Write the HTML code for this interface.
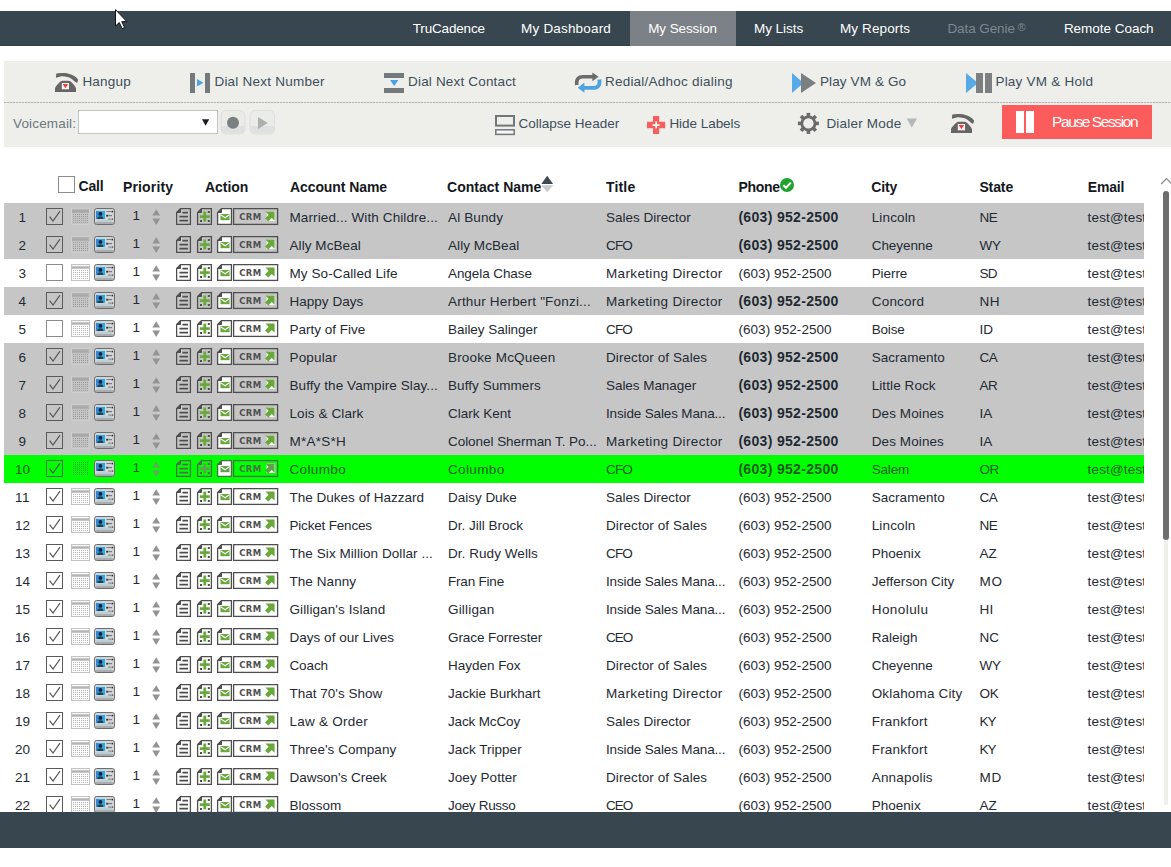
<!DOCTYPE html>
<html lang="en">
<head>
<meta charset="utf-8">
<title>TruCadence - My Session</title>
<style>
html,body{margin:0;padding:0}
body{width:1171px;height:867px;position:relative;overflow:hidden;background:#fff;font-family:"Liberation Sans",sans-serif;font-size:14px}
.t{position:absolute;white-space:pre;line-height:0;display:block}
.abs{position:absolute;display:block}
.nav{position:absolute;left:0;top:11px;width:1171px;height:35px;background:#38464f;box-shadow:inset 0 -1px 0 #2e3d47}
.nav .t{margin-top:-11px}
.navact{position:absolute;left:630px;top:0;width:106px;height:35px;background:#7b8186}
.tb{position:absolute;left:4px;top:61px;width:1167px;height:86px;background:#eeeeea}
.tbline{position:absolute;left:4px;top:102px;width:1167px;height:1px;background:repeating-linear-gradient(90deg,#b4b4b2 0,#b4b4b2 2px,#d9d9d6 2px,#d9d9d6 3px)}
.pause{position:absolute;left:1002px;top:105px;width:150px;height:34px;background:#fc5c5c}
.pause i{position:absolute;top:6px;width:8px;height:22px;background:#fff}
.cb{position:absolute;width:15px;height:15px;border:1px solid #8c8c8c;background:#fff}
.cb.ck{border-color:#5a5a5a}
.cb svg{display:block}
.grid{position:absolute;left:4px;top:0;width:1140px;height:812px;overflow:hidden}
.row{position:absolute;left:0;width:1140px;height:28px}
.row.g{background:#c6c6c6}
.row.G{background:#00ff00}
.row.G .cb{border-color:#4a704a}
.ic{color:#4e4e4e}
.row.G .ic{color:#4a704a;--g:#62a04c;--a:#5fa85f}
.row.g .cb,.row.G .cb{background:transparent}
.sbt{position:absolute;left:1164px;top:191px;width:4px;height:614px;background:#eeeeea;border-radius:2px}
.sbh{position:absolute;left:1163px;top:191px;width:6px;height:349px;background:#6e6e6e;border-radius:3px}
.foot{position:absolute;left:0;top:812px;width:1171px;height:36px;background:#38464f}
</style>
</head>
<body>
<svg width="0" height="0" style="position:absolute">
<defs>
<pattern id="dots" x="0" y="0" width="2" height="2" patternUnits="userSpaceOnUse"><rect x="0" y="0" width="1" height="1" fill="#b4b4b4"/></pattern>
<pattern id="dotsd" x="0" y="0" width="2" height="2" patternUnits="userSpaceOnUse"><rect x="0" y="0" width="1" height="1" fill="#9a9a9a"/></pattern>
<g id="card">
 <rect x="0.5" y="0.5" width="20" height="16" rx="2.2" fill="#d2d5d7" stroke="#6c6c6c"/>
 <rect x="1.2" y="14" width="18.6" height="2" fill="#8a8a8a" opacity=".55"/>
 <rect x="2" y="3" width="9" height="8" fill="#25a9e8"/>
 <rect x="2" y="3" width="2.4" height="8" fill="#2f7fd6" opacity=".8"/>
 <circle cx="6.4" cy="5.9" r="1.9" fill="#17182a"/>
 <path d="M3.4 11 Q3.4 8.2 6.4 8.2 Q9.4 8.2 9.4 11Z" fill="#21414b"/>
 <rect x="12.4" y="3" width="5" height="1" fill="#7d7d7d"/><rect x="17.6" y="2.8" width="1.6" height="1.6" fill="#333"/>
 <rect x="12.2" y="6.8" width="2" height="1.8" fill="#333"/><rect x="14.4" y="7" width="3.6" height="1.2" fill="#777"/>
 <rect x="14.4" y="10.6" width="3" height="1.2" fill="#888"/><rect x="17.8" y="10.4" width="1.4" height="1.4" fill="#555"/>
 <rect x="2.4" y="12.2" width="15.6" height="1.6" fill="#b5c9d6" opacity=".8"/>
</g>
<g id="calw">
 <rect x="0.5" y="0.5" width="18" height="16" fill="#fff" stroke="#c2c2c2"/>
 <rect x="1" y="2.2" width="17" height="2.6" fill="#b6b6b6"/>
 <rect x="2" y="6" width="15" height="9" fill="url(#dots)"/>
</g>
<g id="calg">
 <rect x="0.5" y="0.5" width="18" height="16" fill="none" stroke="#d6d6d6" stroke-dasharray="1 1"/>
 <rect x="1" y="1" width="17" height="1.2" fill="#b2b2b2"/>
 <rect x="1" y="2.2" width="17" height="2.6" fill="#a8a8a8"/>
 <rect x="2" y="6" width="15" height="9" fill="url(#dotsd)"/>
</g>
<pattern id="dotsG" x="0" y="0" width="2" height="2" patternUnits="userSpaceOnUse"><rect x="0" y="0" width="1" height="1" fill="#2a9a2a"/></pattern>
<g id="calG">
 <rect x="1" y="1" width="17" height="15" fill="url(#dotsG)"/>
</g>
<g id="acts">
 <!-- note -->
 <path d="M4.5 0.6 H14.4 V16.4 H0.6 V4.5 Z" fill="none" stroke="currentColor" stroke-width="1.3"/>
 <path d="M0.6 4.5 H4.5 V0.6" fill="currentColor" stroke="currentColor" stroke-width="1"/>
 <path d="M6.4 4.6 H12 M3.4 8.6 H12 M3.4 12.6 H12" stroke="currentColor" stroke-width="1.8"/>
 <!-- plus -->
 <g transform="translate(21,0)">
 <path d="M4.5 0.6 H14.4 V16.4 H0.6 V4.5 Z" fill="none" stroke="currentColor" stroke-width="1.3"/>
 <path d="M0.6 4.5 H4.5 V0.6" fill="currentColor" stroke="currentColor" stroke-width="1"/>
 <path d="M7.8 3.6 V13.6 M2.8 8.6 H12.8" stroke="var(--g,#69a83b)" stroke-width="2.8"/>
 <path d="M10.8 3 h2 v2 h-2z M3 12 h2 v2 h-2z M10.8 12 h2 v2 h-2z" fill="currentColor"/>
 </g>
 <!-- mail -->
 <g transform="translate(41,0)">
 <path d="M4.5 0.6 H14.4 V16.4 H0.6 V4.5 Z" fill="#fff" stroke="currentColor" stroke-width="1.3"/>
 <path d="M0.6 4.5 H4.5 V0.6" fill="currentColor" stroke="currentColor" stroke-width="1"/>
 <rect x="3.5" y="6" width="9" height="6.2" fill="var(--g,#69a83b)"/>
 <path d="M3.5 6.6 L8 9.8 L12.5 6.6" stroke="#fff" stroke-width="1.1" fill="none"/>
 </g>
 <!-- crm -->
 <g transform="translate(57,0)">
 <rect x="0.6" y="0.6" width="44" height="15.8" fill="none" stroke="currentColor" stroke-width="1.3"/>
 <rect x="33.6" y="3.4" width="8.6" height="9.6" fill="#fff"/>
 <path d="M32.4 3.6 H41.6 V12.8 L38.8 10 L35.2 13.6 L32 10.4 L35.6 6.8 Z" fill="var(--g,#69a83b)"/>
 </g>
</g>
</defs>
</svg>
<div class="nav">
<div class="navact"></div>
<span class="t" style="left:412.8px;top:29.1px;font-size:13.5px;font-weight:400;color:#fff;letter-spacing:-0.18px;">TruCadence</span>
<span class="t" style="left:521.1px;top:29.1px;font-size:13.5px;font-weight:400;color:#fff;letter-spacing:0.18px;">My Dashboard</span>
<span class="t" style="left:648.2px;top:29.1px;font-size:13.5px;font-weight:400;color:#fff;letter-spacing:-0.10px;">My Session</span>
<span class="t" style="left:753.9px;top:29.1px;font-size:13.5px;font-weight:400;color:#fff;letter-spacing:-0.01px;">My Lists</span>
<span class="t" style="left:840.0px;top:29.1px;font-size:13.5px;font-weight:400;color:#fff;letter-spacing:0.11px;">My Reports</span>
<span class="t" style="left:1063.8999999999999px;top:29.1px;font-size:13.5px;font-weight:400;color:#fff;letter-spacing:-0.03px;">Remote Coach</span>
<span class="t" style="left:947.4px;top:29.1px;font-size:13.5px;font-weight:400;color:#7f888e;letter-spacing:-0.08px;">Data Genie</span>
<span class="t" style="left:1017.5px;top:27.1px;font-size:11px;font-weight:400;color:#7f888e;letter-spacing:0.89px;">®</span>
</div>
<div class="tb"></div><div class="tbline"></div>
<span class="t" style="left:82.4px;top:81.7px;font-size:13.5px;font-weight:400;color:#3d4e5b;letter-spacing:0.22px;">Hangup</span>
<span class="t" style="left:214.4px;top:81.7px;font-size:13.5px;font-weight:400;color:#3d4e5b;letter-spacing:0.24px;">Dial Next Number</span>
<span class="t" style="left:408.1px;top:81.7px;font-size:13.5px;font-weight:400;color:#3d4e5b;letter-spacing:0.17px;">Dial Next Contact</span>
<span class="t" style="left:604.9px;top:81.7px;font-size:13.5px;font-weight:400;color:#3d4e5b;letter-spacing:0.24px;">Redial/Adhoc dialing</span>
<span class="t" style="left:819.9px;top:81.7px;font-size:13.5px;font-weight:400;color:#3d4e5b;letter-spacing:0.13px;">Play VM &amp; Go</span>
<span class="t" style="left:995.4px;top:81.7px;font-size:13.5px;font-weight:400;color:#3d4e5b;letter-spacing:0.23px;">Play VM &amp; Hold</span>
<span class="t" style="left:13px;top:123.5px;font-size:13.5px;font-weight:400;color:#6b7780;letter-spacing:0.16px;">Voicemail:</span>
<span class="t" style="left:518.4px;top:123.5px;font-size:13.5px;font-weight:400;color:#3d4e5b;letter-spacing:0.02px;">Collapse Header</span>
<span class="t" style="left:669.4px;top:123.5px;font-size:13.5px;font-weight:400;color:#3d4e5b;letter-spacing:-0.04px;">Hide Labels</span>
<span class="t" style="left:826.4px;top:123.5px;font-size:13.5px;font-weight:400;color:#3d4e5b;letter-spacing:0.21px;">Dialer Mode</span>
<svg class="abs" style="left:0;top:61px" width="1171" height="86" viewBox="0 61 1171 86">
<defs>
<g id="phone">
 <path d="M1.3 0.5 C4 -0.3 8 -0.2 10.5 0.1 C15 0.8 19 2.6 21.1 4.3 L23.2 6.8 L22.1 10 L20 8.8 L17.7 6.8 C15.5 5.1 13.5 4.3 12.5 4.1 C10 3.4 7.5 3.2 5.7 3.4 L0.9 4.8 Z" fill="#666"/>
 <path d="M0 19 V15.4 C0 13.6 4.2 9.6 5.6 8.4 Q6.4 7.7 7.6 7.7 H13.6 Q14.8 7.7 15.6 8.4 C17 9.6 21 13.6 21 15.4 V19 Z" fill="#666"/>
 <rect x="6.8" y="10" width="7.2" height="6.3" fill="#f4f4f4"/>
 <path d="M7.7 10.9 H13.1 L10.4 15.3 Z" fill="#ee3b3b"/>
</g>
</defs>
<use href="#phone" x="55" y="73"/>
<use href="#phone" x="951" y="114"/>
<!-- dial next number -->
<rect x="190" y="73" width="5" height="20" fill="#747a7c"/><rect x="205" y="73" width="5" height="20" fill="#747a7c"/>
<path d="M197 79 L203.4 82.8 L197 86.6Z" fill="#4ba3e7"/>
<!-- dial next contact -->
<rect x="384" y="73" width="20" height="5" fill="#747a7c"/><rect x="384" y="88" width="20" height="5" fill="#747a7c"/>
<path d="M390 80 H398.4 L394.2 86Z" fill="#4ba3e7"/>
<!-- redial -->
<path d="M576.8 85 C576 79 578.5 76.8 583 76.8 H593" fill="none" stroke="#6b6b6b" stroke-width="3.6"/>
<path d="M592.4 72.6 L598.6 76.8 L592.4 81.2Z" fill="#6b6b6b"/>
<path d="M599.4 79.4 C600.2 85.6 597.8 87.8 593 87.8 H583.4" fill="none" stroke="#4ea2e3" stroke-width="3.8"/>
<path d="M584.4 82.6 L577.8 87.8 L584.4 92.8Z" fill="#4ea2e3"/>
<!-- play vm & go -->
<path d="M792 73 L803.5 83 L792 93Z" fill="#57a9e7"/><path d="M801 73 L816 83 L801 93Z" fill="#7b7f81"/>
<!-- play vm & hold -->
<path d="M966 73 L978 83 L966 93Z" fill="#57a9e7"/><rect x="976" y="73" width="7" height="20" fill="#7b7f81"/><rect x="985" y="73" width="7" height="20" fill="#7b7f81"/>
<!-- select -->
<rect x="78.5" y="110.5" width="139" height="23" fill="#fff" stroke="#8d8d8d" stroke-width="1" stroke-dasharray="1 1"/>
<path d="M202 119.2 H209.2 L205.6 125.8Z" fill="#1a1a22"/>
<!-- rec / play buttons -->
<rect x="221" y="110.5" width="24" height="23.5" rx="5" fill="#ebebe8" stroke="#dcdfe0" stroke-width="1"/>
<path d="M221.5 126 H244.5 V129 Q244.5 133.5 240 133.5 H226 Q221.5 133.5 221.5 129Z" fill="#dfe1e1"/>
<circle cx="233" cy="122.8" r="6" fill="#7b8081"/>
<rect x="250" y="110.5" width="24.5" height="23.5" rx="5" fill="#ebebe8" stroke="#dcdfe0" stroke-width="1"/>
<path d="M250.5 126 H274 V129 Q274 133.5 269.5 133.5 H255 Q250.5 133.5 250.5 129Z" fill="#dfe1e1"/>
<path d="M258 117 L267.8 123 L258 129Z" fill="#aeb0b0"/>
<!-- collapse header -->
<rect x="496" y="116" width="18" height="9.6" fill="none" stroke="#70777a" stroke-width="2"/>
<rect x="495.8" y="129.8" width="18.4" height="4.6" fill="#f6f6f4" stroke="#70777a" stroke-width="1.5"/>
<!-- hide labels -->
<path d="M653 116 H659.2 V121.8 H665.2 V128.2 H659.2 V134 H653 V128.2 H647 V121.8 H653Z" fill="#f95e5e"/>
<path d="M656.1 121.6 V128.6 M652.6 125.1 H659.6" stroke="#fff" stroke-width="1.6"/>
<!-- gear -->
<g transform="translate(808.4,123.4)" fill="#6b6b6b">
 <g id="tooth2"><rect x="-1.8" y="-10.5" width="3.6" height="21"/></g>
 <use href="#tooth2" transform="rotate(45)"/><use href="#tooth2" transform="rotate(90)"/><use href="#tooth2" transform="rotate(135)"/>
 <circle r="8"/><circle r="5.2" fill="#eeeeea"/>
</g>
<!-- dialer mode caret -->
<path d="M906.6 118.6 H917 L911.8 127.4Z" fill="#b3b8b8"/>
</svg>

<div class="pause"><i style="left:14px"></i><i style="left:24px"></i></div>
<span class="t" style="left:1052px;top:121.9px;font-size:15.5px;font-weight:400;color:#fff;letter-spacing:-1.40px;">Pause Session</span>
<div class="cb" style="left:58px;top:176px"></div>
<span class="t" style="left:78.5px;top:185.9px;font-size:14px;font-weight:700;color:#14181c;letter-spacing:-0.17px;">Call</span>
<span class="t" style="left:123px;top:186.8px;font-size:14px;font-weight:700;color:#14181c;letter-spacing:0.14px;">Priority</span>
<span class="t" style="left:205px;top:186.8px;font-size:14px;font-weight:700;color:#14181c;letter-spacing:-0.04px;">Action</span>
<span class="t" style="left:290px;top:186.8px;font-size:14px;font-weight:700;color:#14181c;letter-spacing:-0.09px;">Account Name</span>
<span class="t" style="left:447px;top:186.8px;font-size:14px;font-weight:700;color:#14181c;letter-spacing:0.02px;">Contact Name</span>
<span class="t" style="left:606px;top:186.8px;font-size:14px;font-weight:700;color:#14181c;letter-spacing:0.17px;">Title</span>
<span class="t" style="left:738.4px;top:186.8px;font-size:14px;font-weight:700;color:#14181c;letter-spacing:-0.28px;">Phone</span>
<span class="t" style="left:871.2px;top:186.8px;font-size:14px;font-weight:700;color:#14181c;letter-spacing:-0.09px;">City</span>
<span class="t" style="left:979.4px;top:186.8px;font-size:14px;font-weight:700;color:#14181c;letter-spacing:-0.11px;">State</span>
<span class="t" style="left:1087.8px;top:186.8px;font-size:14px;font-weight:700;color:#14181c;letter-spacing:-0.19px;">Email</span>
<svg class="abs" style="left:541px;top:175px" width="13" height="18" viewBox="0 0 13 18"><path d="M0.3 9 L6.2 0.8 L12.1 9Z" fill="#3d4a52"/><path d="M0.3 10.2 L12.1 10.2 L6.2 17.2Z" fill="#c9c9c9"/></svg>
<svg class="abs" style="left:780px;top:178px" width="14" height="14" viewBox="0 0 14 14"><circle cx="7" cy="7" r="7" fill="#23a230"/><path d="M3.4 7.2 L6 9.8 L10.8 4.6" stroke="#fff" stroke-width="2" fill="none"/></svg>
<div class="grid">
<div class="row g" style="top:203px">
<span class="t" style="left:14.6px;top:15.3px;font-size:13.5px;font-weight:400;color:#1f2a33;letter-spacing:0.03px;">1</span>
<div class="cb ck" style="left:42px;top:5px"><svg width="15" height="15" viewBox="0 0 15 15"><path d="M2.6 7.6 L6 12 L13 2.2" stroke="#555" stroke-width="1.2" fill="none"/></svg></div>
<svg class="abs" style="left:67px;top:5px" width="44" height="18"><use href="#calg"/><use href="#card" x="23"/></svg>
<span class="t" style="left:128.4px;top:12.9px;font-size:13.5px;font-weight:400;color:#1f2a33;letter-spacing:0.03px;">1</span>
<svg class="abs ic" style="left:148px;top:6px" width="9" height="17" viewBox="0 0 9 17"><path d="M0.3 6.6 L4.2 0.2 L8.1 6.6Z M0.3 9.4 L8.1 9.4 L4.2 16Z" fill="var(--a,#939393)"/></svg>
<svg class="abs ic" style="left:172px;top:5px" width="106" height="18"><use href="#acts"/></svg>
<span class="t" style="left:235.2px;top:13.5px;font-size:8.5px;font-weight:700;color:#4f4f4f;letter-spacing:0.38px;font-family:'DejaVu Sans','Liberation Sans',sans-serif;">CRM</span>
<span class="t" style="left:285.5px;top:15.3px;font-size:13.5px;font-weight:400;color:#1f2a33;letter-spacing:0.11px;">Married... With Childre...</span>
<span class="t" style="left:444px;top:15.3px;font-size:13.5px;font-weight:400;color:#1f2a33;letter-spacing:0.13px;">Al Bundy</span>
<span class="t" style="left:602px;top:15.3px;font-size:13.5px;font-weight:400;color:#1f2a33;letter-spacing:-0.00px;">Sales Director</span>
<span class="t" style="left:734.4px;top:13.8px;font-size:14px;font-weight:700;color:#1f2a33;letter-spacing:0.32px;">(603) 952-2500</span>
<span class="t" style="left:867.7px;top:15.3px;font-size:13.5px;font-weight:400;color:#1f2a33;letter-spacing:0.15px;">Lincoln</span>
<span class="t" style="left:975.6px;top:15.3px;font-size:13.5px;font-weight:400;color:#1f2a33;letter-spacing:-0.61px;">NE</span>
<span class="t" style="left:1083.6px;top:15.3px;font-size:13.5px;font-weight:400;color:#1f2a33;letter-spacing:0.16px;">test@test.com</span>
</div>
<div class="row g" style="top:231px">
<span class="t" style="left:14.6px;top:15.3px;font-size:13.5px;font-weight:400;color:#1f2a33;letter-spacing:0.03px;">2</span>
<div class="cb ck" style="left:42px;top:5px"><svg width="15" height="15" viewBox="0 0 15 15"><path d="M2.6 7.6 L6 12 L13 2.2" stroke="#555" stroke-width="1.2" fill="none"/></svg></div>
<svg class="abs" style="left:67px;top:5px" width="44" height="18"><use href="#calg"/><use href="#card" x="23"/></svg>
<span class="t" style="left:128.4px;top:12.9px;font-size:13.5px;font-weight:400;color:#1f2a33;letter-spacing:0.03px;">1</span>
<svg class="abs ic" style="left:148px;top:6px" width="9" height="17" viewBox="0 0 9 17"><path d="M0.3 6.6 L4.2 0.2 L8.1 6.6Z M0.3 9.4 L8.1 9.4 L4.2 16Z" fill="var(--a,#939393)"/></svg>
<svg class="abs ic" style="left:172px;top:5px" width="106" height="18"><use href="#acts"/></svg>
<span class="t" style="left:235.2px;top:13.5px;font-size:8.5px;font-weight:700;color:#4f4f4f;letter-spacing:0.38px;font-family:'DejaVu Sans','Liberation Sans',sans-serif;">CRM</span>
<span class="t" style="left:285.5px;top:15.3px;font-size:13.5px;font-weight:400;color:#1f2a33;letter-spacing:0.07px;">Ally McBeal</span>
<span class="t" style="left:444px;top:15.3px;font-size:13.5px;font-weight:400;color:#1f2a33;letter-spacing:0.07px;">Ally McBeal</span>
<span class="t" style="left:602px;top:15.3px;font-size:13.5px;font-weight:400;color:#1f2a33;letter-spacing:-0.82px;">CFO</span>
<span class="t" style="left:734.4px;top:13.8px;font-size:14px;font-weight:700;color:#1f2a33;letter-spacing:0.32px;">(603) 952-2500</span>
<span class="t" style="left:867.7px;top:15.3px;font-size:13.5px;font-weight:400;color:#1f2a33;letter-spacing:-0.06px;">Cheyenne</span>
<span class="t" style="left:975.6px;top:15.3px;font-size:13.5px;font-weight:400;color:#1f2a33;letter-spacing:-0.44px;">WY</span>
<span class="t" style="left:1083.6px;top:15.3px;font-size:13.5px;font-weight:400;color:#1f2a33;letter-spacing:0.16px;">test@test.com</span>
</div>
<div class="row" style="top:259px">
<span class="t" style="left:14.6px;top:15.3px;font-size:13.5px;font-weight:400;color:#1f2a33;letter-spacing:0.03px;">3</span>
<div class="cb" style="left:42px;top:5px"></div>
<svg class="abs" style="left:67px;top:5px" width="44" height="18"><use href="#calw"/><use href="#card" x="23"/></svg>
<span class="t" style="left:128.4px;top:12.9px;font-size:13.5px;font-weight:400;color:#1f2a33;letter-spacing:0.03px;">1</span>
<svg class="abs ic" style="left:148px;top:6px" width="9" height="17" viewBox="0 0 9 17"><path d="M0.3 6.6 L4.2 0.2 L8.1 6.6Z M0.3 9.4 L8.1 9.4 L4.2 16Z" fill="var(--a,#939393)"/></svg>
<svg class="abs ic" style="left:172px;top:5px" width="106" height="18"><use href="#acts"/></svg>
<span class="t" style="left:235.2px;top:13.5px;font-size:8.5px;font-weight:700;color:#4f4f4f;letter-spacing:0.38px;font-family:'DejaVu Sans','Liberation Sans',sans-serif;">CRM</span>
<span class="t" style="left:285.5px;top:15.3px;font-size:13.5px;font-weight:400;color:#1f2a33;letter-spacing:0.09px;">My So-Called Life</span>
<span class="t" style="left:444px;top:15.3px;font-size:13.5px;font-weight:400;color:#1f2a33;letter-spacing:-0.08px;">Angela Chase</span>
<span class="t" style="left:602px;top:15.3px;font-size:13.5px;font-weight:400;color:#1f2a33;letter-spacing:0.35px;">Marketing Director</span>
<span class="t" style="left:734.4px;top:15.3px;font-size:13.5px;font-weight:400;color:#1f2a33;letter-spacing:0.07px;">(603) 952-2500</span>
<span class="t" style="left:867.7px;top:15.3px;font-size:13.5px;font-weight:400;color:#1f2a33;letter-spacing:-0.07px;">Pierre</span>
<span class="t" style="left:975.6px;top:15.3px;font-size:13.5px;font-weight:400;color:#1f2a33;letter-spacing:-0.76px;">SD</span>
<span class="t" style="left:1083.6px;top:15.3px;font-size:13.5px;font-weight:400;color:#1f2a33;letter-spacing:0.16px;">test@test.com</span>
</div>
<div class="row g" style="top:287px">
<span class="t" style="left:14.6px;top:15.3px;font-size:13.5px;font-weight:400;color:#1f2a33;letter-spacing:0.03px;">4</span>
<div class="cb ck" style="left:42px;top:5px"><svg width="15" height="15" viewBox="0 0 15 15"><path d="M2.6 7.6 L6 12 L13 2.2" stroke="#555" stroke-width="1.2" fill="none"/></svg></div>
<svg class="abs" style="left:67px;top:5px" width="44" height="18"><use href="#calg"/><use href="#card" x="23"/></svg>
<span class="t" style="left:128.4px;top:12.9px;font-size:13.5px;font-weight:400;color:#1f2a33;letter-spacing:0.03px;">1</span>
<svg class="abs ic" style="left:148px;top:6px" width="9" height="17" viewBox="0 0 9 17"><path d="M0.3 6.6 L4.2 0.2 L8.1 6.6Z M0.3 9.4 L8.1 9.4 L4.2 16Z" fill="var(--a,#939393)"/></svg>
<svg class="abs ic" style="left:172px;top:5px" width="106" height="18"><use href="#acts"/></svg>
<span class="t" style="left:235.2px;top:13.5px;font-size:8.5px;font-weight:700;color:#4f4f4f;letter-spacing:0.38px;font-family:'DejaVu Sans','Liberation Sans',sans-serif;">CRM</span>
<span class="t" style="left:285.5px;top:15.3px;font-size:13.5px;font-weight:400;color:#1f2a33;letter-spacing:0.02px;">Happy Days</span>
<span class="t" style="left:444px;top:15.3px;font-size:13.5px;font-weight:400;color:#1f2a33;letter-spacing:0.19px;">Arthur Herbert &quot;Fonzi...</span>
<span class="t" style="left:602px;top:15.3px;font-size:13.5px;font-weight:400;color:#1f2a33;letter-spacing:0.35px;">Marketing Director</span>
<span class="t" style="left:734.4px;top:13.8px;font-size:14px;font-weight:700;color:#1f2a33;letter-spacing:0.32px;">(603) 952-2500</span>
<span class="t" style="left:867.7px;top:15.3px;font-size:13.5px;font-weight:400;color:#1f2a33;letter-spacing:0.22px;">Concord</span>
<span class="t" style="left:975.6px;top:15.3px;font-size:13.5px;font-weight:400;color:#1f2a33;letter-spacing:0.46px;">NH</span>
<span class="t" style="left:1083.6px;top:15.3px;font-size:13.5px;font-weight:400;color:#1f2a33;letter-spacing:0.16px;">test@test.com</span>
</div>
<div class="row" style="top:315px">
<span class="t" style="left:14.6px;top:15.3px;font-size:13.5px;font-weight:400;color:#1f2a33;letter-spacing:0.03px;">5</span>
<div class="cb" style="left:42px;top:5px"></div>
<svg class="abs" style="left:67px;top:5px" width="44" height="18"><use href="#calw"/><use href="#card" x="23"/></svg>
<span class="t" style="left:128.4px;top:12.9px;font-size:13.5px;font-weight:400;color:#1f2a33;letter-spacing:0.03px;">1</span>
<svg class="abs ic" style="left:148px;top:6px" width="9" height="17" viewBox="0 0 9 17"><path d="M0.3 6.6 L4.2 0.2 L8.1 6.6Z M0.3 9.4 L8.1 9.4 L4.2 16Z" fill="var(--a,#939393)"/></svg>
<svg class="abs ic" style="left:172px;top:5px" width="106" height="18"><use href="#acts"/></svg>
<span class="t" style="left:235.2px;top:13.5px;font-size:8.5px;font-weight:700;color:#4f4f4f;letter-spacing:0.38px;font-family:'DejaVu Sans','Liberation Sans',sans-serif;">CRM</span>
<span class="t" style="left:285.5px;top:15.3px;font-size:13.5px;font-weight:400;color:#1f2a33;letter-spacing:0.00px;">Party of Five</span>
<span class="t" style="left:444px;top:15.3px;font-size:13.5px;font-weight:400;color:#1f2a33;letter-spacing:-0.04px;">Bailey Salinger</span>
<span class="t" style="left:602px;top:15.3px;font-size:13.5px;font-weight:400;color:#1f2a33;letter-spacing:-0.82px;">CFO</span>
<span class="t" style="left:734.4px;top:15.3px;font-size:13.5px;font-weight:400;color:#1f2a33;letter-spacing:0.07px;">(603) 952-2500</span>
<span class="t" style="left:867.7px;top:15.3px;font-size:13.5px;font-weight:400;color:#1f2a33;letter-spacing:-0.18px;">Boise</span>
<span class="t" style="left:975.6px;top:15.3px;font-size:13.5px;font-weight:400;color:#1f2a33;letter-spacing:0.02px;">ID</span>
<span class="t" style="left:1083.6px;top:15.3px;font-size:13.5px;font-weight:400;color:#1f2a33;letter-spacing:0.16px;">test@test.com</span>
</div>
<div class="row g" style="top:343px">
<span class="t" style="left:14.6px;top:15.3px;font-size:13.5px;font-weight:400;color:#1f2a33;letter-spacing:0.03px;">6</span>
<div class="cb ck" style="left:42px;top:5px"><svg width="15" height="15" viewBox="0 0 15 15"><path d="M2.6 7.6 L6 12 L13 2.2" stroke="#555" stroke-width="1.2" fill="none"/></svg></div>
<svg class="abs" style="left:67px;top:5px" width="44" height="18"><use href="#calg"/><use href="#card" x="23"/></svg>
<span class="t" style="left:128.4px;top:12.9px;font-size:13.5px;font-weight:400;color:#1f2a33;letter-spacing:0.03px;">1</span>
<svg class="abs ic" style="left:148px;top:6px" width="9" height="17" viewBox="0 0 9 17"><path d="M0.3 6.6 L4.2 0.2 L8.1 6.6Z M0.3 9.4 L8.1 9.4 L4.2 16Z" fill="var(--a,#939393)"/></svg>
<svg class="abs ic" style="left:172px;top:5px" width="106" height="18"><use href="#acts"/></svg>
<span class="t" style="left:235.2px;top:13.5px;font-size:8.5px;font-weight:700;color:#4f4f4f;letter-spacing:0.38px;font-family:'DejaVu Sans','Liberation Sans',sans-serif;">CRM</span>
<span class="t" style="left:285.5px;top:15.3px;font-size:13.5px;font-weight:400;color:#1f2a33;letter-spacing:0.15px;">Popular</span>
<span class="t" style="left:444px;top:15.3px;font-size:13.5px;font-weight:400;color:#1f2a33;letter-spacing:0.17px;">Brooke McQueen</span>
<span class="t" style="left:602px;top:15.3px;font-size:13.5px;font-weight:400;color:#1f2a33;letter-spacing:0.08px;">Director of Sales</span>
<span class="t" style="left:734.4px;top:13.8px;font-size:14px;font-weight:700;color:#1f2a33;letter-spacing:0.32px;">(603) 952-2500</span>
<span class="t" style="left:867.7px;top:15.3px;font-size:13.5px;font-weight:400;color:#1f2a33;letter-spacing:0.04px;">Sacramento</span>
<span class="t" style="left:975.6px;top:15.3px;font-size:13.5px;font-weight:400;color:#1f2a33;letter-spacing:-0.53px;">CA</span>
<span class="t" style="left:1083.6px;top:15.3px;font-size:13.5px;font-weight:400;color:#1f2a33;letter-spacing:0.16px;">test@test.com</span>
</div>
<div class="row g" style="top:371px">
<span class="t" style="left:14.6px;top:15.3px;font-size:13.5px;font-weight:400;color:#1f2a33;letter-spacing:0.03px;">7</span>
<div class="cb ck" style="left:42px;top:5px"><svg width="15" height="15" viewBox="0 0 15 15"><path d="M2.6 7.6 L6 12 L13 2.2" stroke="#555" stroke-width="1.2" fill="none"/></svg></div>
<svg class="abs" style="left:67px;top:5px" width="44" height="18"><use href="#calg"/><use href="#card" x="23"/></svg>
<span class="t" style="left:128.4px;top:12.9px;font-size:13.5px;font-weight:400;color:#1f2a33;letter-spacing:0.03px;">1</span>
<svg class="abs ic" style="left:148px;top:6px" width="9" height="17" viewBox="0 0 9 17"><path d="M0.3 6.6 L4.2 0.2 L8.1 6.6Z M0.3 9.4 L8.1 9.4 L4.2 16Z" fill="var(--a,#939393)"/></svg>
<svg class="abs ic" style="left:172px;top:5px" width="106" height="18"><use href="#acts"/></svg>
<span class="t" style="left:235.2px;top:13.5px;font-size:8.5px;font-weight:700;color:#4f4f4f;letter-spacing:0.38px;font-family:'DejaVu Sans','Liberation Sans',sans-serif;">CRM</span>
<span class="t" style="left:285.5px;top:15.3px;font-size:13.5px;font-weight:400;color:#1f2a33;letter-spacing:0.08px;">Buffy the Vampire Slay...</span>
<span class="t" style="left:444px;top:15.3px;font-size:13.5px;font-weight:400;color:#1f2a33;letter-spacing:0.06px;">Buffy Summers</span>
<span class="t" style="left:602px;top:15.3px;font-size:13.5px;font-weight:400;color:#1f2a33;letter-spacing:-0.05px;">Sales Manager</span>
<span class="t" style="left:734.4px;top:13.8px;font-size:14px;font-weight:700;color:#1f2a33;letter-spacing:0.32px;">(603) 952-2500</span>
<span class="t" style="left:867.7px;top:15.3px;font-size:13.5px;font-weight:400;color:#1f2a33;letter-spacing:0.09px;">Little Rock</span>
<span class="t" style="left:975.6px;top:15.3px;font-size:13.5px;font-weight:400;color:#1f2a33;letter-spacing:-0.68px;">AR</span>
<span class="t" style="left:1083.6px;top:15.3px;font-size:13.5px;font-weight:400;color:#1f2a33;letter-spacing:0.16px;">test@test.com</span>
</div>
<div class="row g" style="top:399px">
<span class="t" style="left:14.6px;top:15.3px;font-size:13.5px;font-weight:400;color:#1f2a33;letter-spacing:0.03px;">8</span>
<div class="cb ck" style="left:42px;top:5px"><svg width="15" height="15" viewBox="0 0 15 15"><path d="M2.6 7.6 L6 12 L13 2.2" stroke="#555" stroke-width="1.2" fill="none"/></svg></div>
<svg class="abs" style="left:67px;top:5px" width="44" height="18"><use href="#calg"/><use href="#card" x="23"/></svg>
<span class="t" style="left:128.4px;top:12.9px;font-size:13.5px;font-weight:400;color:#1f2a33;letter-spacing:0.03px;">1</span>
<svg class="abs ic" style="left:148px;top:6px" width="9" height="17" viewBox="0 0 9 17"><path d="M0.3 6.6 L4.2 0.2 L8.1 6.6Z M0.3 9.4 L8.1 9.4 L4.2 16Z" fill="var(--a,#939393)"/></svg>
<svg class="abs ic" style="left:172px;top:5px" width="106" height="18"><use href="#acts"/></svg>
<span class="t" style="left:235.2px;top:13.5px;font-size:8.5px;font-weight:700;color:#4f4f4f;letter-spacing:0.38px;font-family:'DejaVu Sans','Liberation Sans',sans-serif;">CRM</span>
<span class="t" style="left:285.5px;top:15.3px;font-size:13.5px;font-weight:400;color:#1f2a33;letter-spacing:0.10px;">Lois &amp; Clark</span>
<span class="t" style="left:444px;top:15.3px;font-size:13.5px;font-weight:400;color:#1f2a33;letter-spacing:-0.01px;">Clark Kent</span>
<span class="t" style="left:602px;top:15.3px;font-size:13.5px;font-weight:400;color:#1f2a33;letter-spacing:-0.15px;">Inside Sales Mana...</span>
<span class="t" style="left:734.4px;top:13.8px;font-size:14px;font-weight:700;color:#1f2a33;letter-spacing:0.32px;">(603) 952-2500</span>
<span class="t" style="left:867.7px;top:15.3px;font-size:13.5px;font-weight:400;color:#1f2a33;letter-spacing:0.10px;">Des Moines</span>
<span class="t" style="left:975.6px;top:15.3px;font-size:13.5px;font-weight:400;color:#1f2a33;letter-spacing:-0.00px;">IA</span>
<span class="t" style="left:1083.6px;top:15.3px;font-size:13.5px;font-weight:400;color:#1f2a33;letter-spacing:0.16px;">test@test.com</span>
</div>
<div class="row g" style="top:427px">
<span class="t" style="left:14.6px;top:15.3px;font-size:13.5px;font-weight:400;color:#1f2a33;letter-spacing:0.03px;">9</span>
<div class="cb ck" style="left:42px;top:5px"><svg width="15" height="15" viewBox="0 0 15 15"><path d="M2.6 7.6 L6 12 L13 2.2" stroke="#555" stroke-width="1.2" fill="none"/></svg></div>
<svg class="abs" style="left:67px;top:5px" width="44" height="18"><use href="#calg"/><use href="#card" x="23"/></svg>
<span class="t" style="left:128.4px;top:12.9px;font-size:13.5px;font-weight:400;color:#1f2a33;letter-spacing:0.03px;">1</span>
<svg class="abs ic" style="left:148px;top:6px" width="9" height="17" viewBox="0 0 9 17"><path d="M0.3 6.6 L4.2 0.2 L8.1 6.6Z M0.3 9.4 L8.1 9.4 L4.2 16Z" fill="var(--a,#939393)"/></svg>
<svg class="abs ic" style="left:172px;top:5px" width="106" height="18"><use href="#acts"/></svg>
<span class="t" style="left:235.2px;top:13.5px;font-size:8.5px;font-weight:700;color:#4f4f4f;letter-spacing:0.38px;font-family:'DejaVu Sans','Liberation Sans',sans-serif;">CRM</span>
<span class="t" style="left:285.5px;top:15.3px;font-size:13.5px;font-weight:400;color:#1f2a33;letter-spacing:0.25px;">M*A*S*H</span>
<span class="t" style="left:444px;top:15.3px;font-size:13.5px;font-weight:400;color:#1f2a33;letter-spacing:-0.05px;">Colonel Sherman T. Po...</span>
<span class="t" style="left:602px;top:15.3px;font-size:13.5px;font-weight:400;color:#1f2a33;letter-spacing:0.35px;">Marketing Director</span>
<span class="t" style="left:734.4px;top:13.8px;font-size:14px;font-weight:700;color:#1f2a33;letter-spacing:0.32px;">(603) 952-2500</span>
<span class="t" style="left:867.7px;top:15.3px;font-size:13.5px;font-weight:400;color:#1f2a33;letter-spacing:0.10px;">Des Moines</span>
<span class="t" style="left:975.6px;top:15.3px;font-size:13.5px;font-weight:400;color:#1f2a33;letter-spacing:-0.00px;">IA</span>
<span class="t" style="left:1083.6px;top:15.3px;font-size:13.5px;font-weight:400;color:#1f2a33;letter-spacing:0.16px;">test@test.com</span>
</div>
<div class="row G" style="top:455px">
<span class="t" style="left:10.9px;top:15.3px;font-size:13.5px;font-weight:400;color:#1a5c1a;letter-spacing:0.03px;">10</span>
<div class="cb ck" style="left:42px;top:5px"><svg width="15" height="15" viewBox="0 0 15 15"><path d="M2.6 7.6 L6 12 L13 2.2" stroke="#555" stroke-width="1.2" fill="none"/></svg></div>
<svg class="abs" style="left:67px;top:5px" width="44" height="18"><use href="#calG"/><use href="#card" x="23"/></svg>
<span class="t" style="left:128.4px;top:12.9px;font-size:13.5px;font-weight:400;color:#1a5c1a;letter-spacing:0.03px;">1</span>
<svg class="abs ic" style="left:148px;top:6px" width="9" height="17" viewBox="0 0 9 17"><path d="M0.3 6.6 L4.2 0.2 L8.1 6.6Z M0.3 9.4 L8.1 9.4 L4.2 16Z" fill="var(--a,#939393)"/></svg>
<svg class="abs ic" style="left:172px;top:5px" width="106" height="18"><use href="#acts"/></svg>
<span class="t" style="left:235.2px;top:13.5px;font-size:8.5px;font-weight:700;color:#4a704a;letter-spacing:0.38px;font-family:'DejaVu Sans','Liberation Sans',sans-serif;">CRM</span>
<span class="t" style="left:285.5px;top:15.3px;font-size:13.5px;font-weight:400;color:#1a5c1a;letter-spacing:0.37px;">Columbo</span>
<span class="t" style="left:444px;top:15.3px;font-size:13.5px;font-weight:400;color:#1a5c1a;letter-spacing:0.37px;">Columbo</span>
<span class="t" style="left:602px;top:15.3px;font-size:13.5px;font-weight:400;color:#1a5c1a;letter-spacing:-0.82px;">CFO</span>
<span class="t" style="left:734.4px;top:13.8px;font-size:14px;font-weight:700;color:#1a5c1a;letter-spacing:0.32px;">(603) 952-2500</span>
<span class="t" style="left:867.7px;top:15.3px;font-size:13.5px;font-weight:400;color:#1a5c1a;letter-spacing:-0.19px;">Salem</span>
<span class="t" style="left:975.6px;top:15.3px;font-size:13.5px;font-weight:400;color:#1a5c1a;letter-spacing:-0.66px;">OR</span>
<span class="t" style="left:1083.6px;top:15.3px;font-size:13.5px;font-weight:400;color:#1a5c1a;letter-spacing:0.16px;">test@test.com</span>
</div>
<div class="row" style="top:483px">
<span class="t" style="left:10.9px;top:15.3px;font-size:13.5px;font-weight:400;color:#1f2a33;letter-spacing:0.54px;">11</span>
<div class="cb ck" style="left:42px;top:5px"><svg width="15" height="15" viewBox="0 0 15 15"><path d="M2.6 7.6 L6 12 L13 2.2" stroke="#555" stroke-width="1.2" fill="none"/></svg></div>
<svg class="abs" style="left:67px;top:5px" width="44" height="18"><use href="#calw"/><use href="#card" x="23"/></svg>
<span class="t" style="left:128.4px;top:12.9px;font-size:13.5px;font-weight:400;color:#1f2a33;letter-spacing:0.03px;">1</span>
<svg class="abs ic" style="left:148px;top:6px" width="9" height="17" viewBox="0 0 9 17"><path d="M0.3 6.6 L4.2 0.2 L8.1 6.6Z M0.3 9.4 L8.1 9.4 L4.2 16Z" fill="var(--a,#939393)"/></svg>
<svg class="abs ic" style="left:172px;top:5px" width="106" height="18"><use href="#acts"/></svg>
<span class="t" style="left:235.2px;top:13.5px;font-size:8.5px;font-weight:700;color:#4f4f4f;letter-spacing:0.38px;font-family:'DejaVu Sans','Liberation Sans',sans-serif;">CRM</span>
<span class="t" style="left:285.5px;top:15.3px;font-size:13.5px;font-weight:400;color:#1f2a33;letter-spacing:0.01px;">The Dukes of Hazzard</span>
<span class="t" style="left:444px;top:15.3px;font-size:13.5px;font-weight:400;color:#1f2a33;letter-spacing:-0.02px;">Daisy Duke</span>
<span class="t" style="left:602px;top:15.3px;font-size:13.5px;font-weight:400;color:#1f2a33;letter-spacing:-0.00px;">Sales Director</span>
<span class="t" style="left:734.4px;top:15.3px;font-size:13.5px;font-weight:400;color:#1f2a33;letter-spacing:0.07px;">(603) 952-2500</span>
<span class="t" style="left:867.7px;top:15.3px;font-size:13.5px;font-weight:400;color:#1f2a33;letter-spacing:0.04px;">Sacramento</span>
<span class="t" style="left:975.6px;top:15.3px;font-size:13.5px;font-weight:400;color:#1f2a33;letter-spacing:-0.53px;">CA</span>
<span class="t" style="left:1083.6px;top:15.3px;font-size:13.5px;font-weight:400;color:#1f2a33;letter-spacing:0.16px;">test@test.com</span>
</div>
<div class="row" style="top:511px">
<span class="t" style="left:10.9px;top:15.3px;font-size:13.5px;font-weight:400;color:#1f2a33;letter-spacing:0.03px;">12</span>
<div class="cb ck" style="left:42px;top:5px"><svg width="15" height="15" viewBox="0 0 15 15"><path d="M2.6 7.6 L6 12 L13 2.2" stroke="#555" stroke-width="1.2" fill="none"/></svg></div>
<svg class="abs" style="left:67px;top:5px" width="44" height="18"><use href="#calw"/><use href="#card" x="23"/></svg>
<span class="t" style="left:128.4px;top:12.9px;font-size:13.5px;font-weight:400;color:#1f2a33;letter-spacing:0.03px;">1</span>
<svg class="abs ic" style="left:148px;top:6px" width="9" height="17" viewBox="0 0 9 17"><path d="M0.3 6.6 L4.2 0.2 L8.1 6.6Z M0.3 9.4 L8.1 9.4 L4.2 16Z" fill="var(--a,#939393)"/></svg>
<svg class="abs ic" style="left:172px;top:5px" width="106" height="18"><use href="#acts"/></svg>
<span class="t" style="left:235.2px;top:13.5px;font-size:8.5px;font-weight:700;color:#4f4f4f;letter-spacing:0.38px;font-family:'DejaVu Sans','Liberation Sans',sans-serif;">CRM</span>
<span class="t" style="left:285.5px;top:15.3px;font-size:13.5px;font-weight:400;color:#1f2a33;letter-spacing:-0.19px;">Picket Fences</span>
<span class="t" style="left:444px;top:15.3px;font-size:13.5px;font-weight:400;color:#1f2a33;letter-spacing:0.00px;">Dr. Jill Brock</span>
<span class="t" style="left:602px;top:15.3px;font-size:13.5px;font-weight:400;color:#1f2a33;letter-spacing:0.08px;">Director of Sales</span>
<span class="t" style="left:734.4px;top:15.3px;font-size:13.5px;font-weight:400;color:#1f2a33;letter-spacing:0.07px;">(603) 952-2500</span>
<span class="t" style="left:867.7px;top:15.3px;font-size:13.5px;font-weight:400;color:#1f2a33;letter-spacing:0.15px;">Lincoln</span>
<span class="t" style="left:975.6px;top:15.3px;font-size:13.5px;font-weight:400;color:#1f2a33;letter-spacing:-0.61px;">NE</span>
<span class="t" style="left:1083.6px;top:15.3px;font-size:13.5px;font-weight:400;color:#1f2a33;letter-spacing:0.16px;">test@test.com</span>
</div>
<div class="row" style="top:539px">
<span class="t" style="left:10.9px;top:15.3px;font-size:13.5px;font-weight:400;color:#1f2a33;letter-spacing:0.03px;">13</span>
<div class="cb ck" style="left:42px;top:5px"><svg width="15" height="15" viewBox="0 0 15 15"><path d="M2.6 7.6 L6 12 L13 2.2" stroke="#555" stroke-width="1.2" fill="none"/></svg></div>
<svg class="abs" style="left:67px;top:5px" width="44" height="18"><use href="#calw"/><use href="#card" x="23"/></svg>
<span class="t" style="left:128.4px;top:12.9px;font-size:13.5px;font-weight:400;color:#1f2a33;letter-spacing:0.03px;">1</span>
<svg class="abs ic" style="left:148px;top:6px" width="9" height="17" viewBox="0 0 9 17"><path d="M0.3 6.6 L4.2 0.2 L8.1 6.6Z M0.3 9.4 L8.1 9.4 L4.2 16Z" fill="var(--a,#939393)"/></svg>
<svg class="abs ic" style="left:172px;top:5px" width="106" height="18"><use href="#acts"/></svg>
<span class="t" style="left:235.2px;top:13.5px;font-size:8.5px;font-weight:700;color:#4f4f4f;letter-spacing:0.38px;font-family:'DejaVu Sans','Liberation Sans',sans-serif;">CRM</span>
<span class="t" style="left:285.5px;top:15.3px;font-size:13.5px;font-weight:400;color:#1f2a33;letter-spacing:0.06px;">The Six Million Dollar ...</span>
<span class="t" style="left:444px;top:15.3px;font-size:13.5px;font-weight:400;color:#1f2a33;letter-spacing:0.06px;">Dr. Rudy Wells</span>
<span class="t" style="left:602px;top:15.3px;font-size:13.5px;font-weight:400;color:#1f2a33;letter-spacing:-0.82px;">CFO</span>
<span class="t" style="left:734.4px;top:15.3px;font-size:13.5px;font-weight:400;color:#1f2a33;letter-spacing:0.07px;">(603) 952-2500</span>
<span class="t" style="left:867.7px;top:15.3px;font-size:13.5px;font-weight:400;color:#1f2a33;letter-spacing:0.03px;">Phoenix</span>
<span class="t" style="left:975.6px;top:15.3px;font-size:13.5px;font-weight:400;color:#1f2a33;letter-spacing:-0.13px;">AZ</span>
<span class="t" style="left:1083.6px;top:15.3px;font-size:13.5px;font-weight:400;color:#1f2a33;letter-spacing:0.16px;">test@test.com</span>
</div>
<div class="row" style="top:567px">
<span class="t" style="left:10.9px;top:15.3px;font-size:13.5px;font-weight:400;color:#1f2a33;letter-spacing:0.03px;">14</span>
<div class="cb ck" style="left:42px;top:5px"><svg width="15" height="15" viewBox="0 0 15 15"><path d="M2.6 7.6 L6 12 L13 2.2" stroke="#555" stroke-width="1.2" fill="none"/></svg></div>
<svg class="abs" style="left:67px;top:5px" width="44" height="18"><use href="#calw"/><use href="#card" x="23"/></svg>
<span class="t" style="left:128.4px;top:12.9px;font-size:13.5px;font-weight:400;color:#1f2a33;letter-spacing:0.03px;">1</span>
<svg class="abs ic" style="left:148px;top:6px" width="9" height="17" viewBox="0 0 9 17"><path d="M0.3 6.6 L4.2 0.2 L8.1 6.6Z M0.3 9.4 L8.1 9.4 L4.2 16Z" fill="var(--a,#939393)"/></svg>
<svg class="abs ic" style="left:172px;top:5px" width="106" height="18"><use href="#acts"/></svg>
<span class="t" style="left:235.2px;top:13.5px;font-size:8.5px;font-weight:700;color:#4f4f4f;letter-spacing:0.38px;font-family:'DejaVu Sans','Liberation Sans',sans-serif;">CRM</span>
<span class="t" style="left:285.5px;top:15.3px;font-size:13.5px;font-weight:400;color:#1f2a33;letter-spacing:0.06px;">The Nanny</span>
<span class="t" style="left:444px;top:15.3px;font-size:13.5px;font-weight:400;color:#1f2a33;letter-spacing:-0.20px;">Fran Fine</span>
<span class="t" style="left:602px;top:15.3px;font-size:13.5px;font-weight:400;color:#1f2a33;letter-spacing:-0.15px;">Inside Sales Mana...</span>
<span class="t" style="left:734.4px;top:15.3px;font-size:13.5px;font-weight:400;color:#1f2a33;letter-spacing:0.07px;">(603) 952-2500</span>
<span class="t" style="left:867.7px;top:15.3px;font-size:13.5px;font-weight:400;color:#1f2a33;letter-spacing:0.03px;">Jefferson City</span>
<span class="t" style="left:975.6px;top:15.3px;font-size:13.5px;font-weight:400;color:#1f2a33;letter-spacing:0.69px;">MO</span>
<span class="t" style="left:1083.6px;top:15.3px;font-size:13.5px;font-weight:400;color:#1f2a33;letter-spacing:0.16px;">test@test.com</span>
</div>
<div class="row" style="top:595px">
<span class="t" style="left:10.9px;top:15.3px;font-size:13.5px;font-weight:400;color:#1f2a33;letter-spacing:0.03px;">15</span>
<div class="cb ck" style="left:42px;top:5px"><svg width="15" height="15" viewBox="0 0 15 15"><path d="M2.6 7.6 L6 12 L13 2.2" stroke="#555" stroke-width="1.2" fill="none"/></svg></div>
<svg class="abs" style="left:67px;top:5px" width="44" height="18"><use href="#calw"/><use href="#card" x="23"/></svg>
<span class="t" style="left:128.4px;top:12.9px;font-size:13.5px;font-weight:400;color:#1f2a33;letter-spacing:0.03px;">1</span>
<svg class="abs ic" style="left:148px;top:6px" width="9" height="17" viewBox="0 0 9 17"><path d="M0.3 6.6 L4.2 0.2 L8.1 6.6Z M0.3 9.4 L8.1 9.4 L4.2 16Z" fill="var(--a,#939393)"/></svg>
<svg class="abs ic" style="left:172px;top:5px" width="106" height="18"><use href="#acts"/></svg>
<span class="t" style="left:235.2px;top:13.5px;font-size:8.5px;font-weight:700;color:#4f4f4f;letter-spacing:0.38px;font-family:'DejaVu Sans','Liberation Sans',sans-serif;">CRM</span>
<span class="t" style="left:285.5px;top:15.3px;font-size:13.5px;font-weight:400;color:#1f2a33;letter-spacing:0.10px;">Gilligan&#x27;s Island</span>
<span class="t" style="left:444px;top:15.3px;font-size:13.5px;font-weight:400;color:#1f2a33;letter-spacing:0.18px;">Gilligan</span>
<span class="t" style="left:602px;top:15.3px;font-size:13.5px;font-weight:400;color:#1f2a33;letter-spacing:-0.15px;">Inside Sales Mana...</span>
<span class="t" style="left:734.4px;top:15.3px;font-size:13.5px;font-weight:400;color:#1f2a33;letter-spacing:0.07px;">(603) 952-2500</span>
<span class="t" style="left:867.7px;top:15.3px;font-size:13.5px;font-weight:400;color:#1f2a33;letter-spacing:0.44px;">Honolulu</span>
<span class="t" style="left:975.6px;top:15.3px;font-size:13.5px;font-weight:400;color:#1f2a33;letter-spacing:0.08px;">HI</span>
<span class="t" style="left:1083.6px;top:15.3px;font-size:13.5px;font-weight:400;color:#1f2a33;letter-spacing:0.16px;">test@test.com</span>
</div>
<div class="row" style="top:623px">
<span class="t" style="left:10.9px;top:15.3px;font-size:13.5px;font-weight:400;color:#1f2a33;letter-spacing:0.03px;">16</span>
<div class="cb ck" style="left:42px;top:5px"><svg width="15" height="15" viewBox="0 0 15 15"><path d="M2.6 7.6 L6 12 L13 2.2" stroke="#555" stroke-width="1.2" fill="none"/></svg></div>
<svg class="abs" style="left:67px;top:5px" width="44" height="18"><use href="#calw"/><use href="#card" x="23"/></svg>
<span class="t" style="left:128.4px;top:12.9px;font-size:13.5px;font-weight:400;color:#1f2a33;letter-spacing:0.03px;">1</span>
<svg class="abs ic" style="left:148px;top:6px" width="9" height="17" viewBox="0 0 9 17"><path d="M0.3 6.6 L4.2 0.2 L8.1 6.6Z M0.3 9.4 L8.1 9.4 L4.2 16Z" fill="var(--a,#939393)"/></svg>
<svg class="abs ic" style="left:172px;top:5px" width="106" height="18"><use href="#acts"/></svg>
<span class="t" style="left:235.2px;top:13.5px;font-size:8.5px;font-weight:700;color:#4f4f4f;letter-spacing:0.38px;font-family:'DejaVu Sans','Liberation Sans',sans-serif;">CRM</span>
<span class="t" style="left:285.5px;top:15.3px;font-size:13.5px;font-weight:400;color:#1f2a33;letter-spacing:0.02px;">Days of our Lives</span>
<span class="t" style="left:444px;top:15.3px;font-size:13.5px;font-weight:400;color:#1f2a33;letter-spacing:-0.07px;">Grace Forrester</span>
<span class="t" style="left:602px;top:15.3px;font-size:13.5px;font-weight:400;color:#1f2a33;letter-spacing:-0.99px;">CEO</span>
<span class="t" style="left:734.4px;top:15.3px;font-size:13.5px;font-weight:400;color:#1f2a33;letter-spacing:0.07px;">(603) 952-2500</span>
<span class="t" style="left:867.7px;top:15.3px;font-size:13.5px;font-weight:400;color:#1f2a33;letter-spacing:-0.00px;">Raleigh</span>
<span class="t" style="left:975.6px;top:15.3px;font-size:13.5px;font-weight:400;color:#1f2a33;letter-spacing:-0.18px;">NC</span>
<span class="t" style="left:1083.6px;top:15.3px;font-size:13.5px;font-weight:400;color:#1f2a33;letter-spacing:0.16px;">test@test.com</span>
</div>
<div class="row" style="top:651px">
<span class="t" style="left:10.9px;top:15.3px;font-size:13.5px;font-weight:400;color:#1f2a33;letter-spacing:0.03px;">17</span>
<div class="cb ck" style="left:42px;top:5px"><svg width="15" height="15" viewBox="0 0 15 15"><path d="M2.6 7.6 L6 12 L13 2.2" stroke="#555" stroke-width="1.2" fill="none"/></svg></div>
<svg class="abs" style="left:67px;top:5px" width="44" height="18"><use href="#calw"/><use href="#card" x="23"/></svg>
<span class="t" style="left:128.4px;top:12.9px;font-size:13.5px;font-weight:400;color:#1f2a33;letter-spacing:0.03px;">1</span>
<svg class="abs ic" style="left:148px;top:6px" width="9" height="17" viewBox="0 0 9 17"><path d="M0.3 6.6 L4.2 0.2 L8.1 6.6Z M0.3 9.4 L8.1 9.4 L4.2 16Z" fill="var(--a,#939393)"/></svg>
<svg class="abs ic" style="left:172px;top:5px" width="106" height="18"><use href="#acts"/></svg>
<span class="t" style="left:235.2px;top:13.5px;font-size:8.5px;font-weight:700;color:#4f4f4f;letter-spacing:0.38px;font-family:'DejaVu Sans','Liberation Sans',sans-serif;">CRM</span>
<span class="t" style="left:285.5px;top:15.3px;font-size:13.5px;font-weight:400;color:#1f2a33;letter-spacing:-0.13px;">Coach</span>
<span class="t" style="left:444px;top:15.3px;font-size:13.5px;font-weight:400;color:#1f2a33;letter-spacing:-0.02px;">Hayden Fox</span>
<span class="t" style="left:602px;top:15.3px;font-size:13.5px;font-weight:400;color:#1f2a33;letter-spacing:0.08px;">Director of Sales</span>
<span class="t" style="left:734.4px;top:15.3px;font-size:13.5px;font-weight:400;color:#1f2a33;letter-spacing:0.07px;">(603) 952-2500</span>
<span class="t" style="left:867.7px;top:15.3px;font-size:13.5px;font-weight:400;color:#1f2a33;letter-spacing:-0.06px;">Cheyenne</span>
<span class="t" style="left:975.6px;top:15.3px;font-size:13.5px;font-weight:400;color:#1f2a33;letter-spacing:-0.44px;">WY</span>
<span class="t" style="left:1083.6px;top:15.3px;font-size:13.5px;font-weight:400;color:#1f2a33;letter-spacing:0.16px;">test@test.com</span>
</div>
<div class="row" style="top:679px">
<span class="t" style="left:10.9px;top:15.3px;font-size:13.5px;font-weight:400;color:#1f2a33;letter-spacing:0.03px;">18</span>
<div class="cb ck" style="left:42px;top:5px"><svg width="15" height="15" viewBox="0 0 15 15"><path d="M2.6 7.6 L6 12 L13 2.2" stroke="#555" stroke-width="1.2" fill="none"/></svg></div>
<svg class="abs" style="left:67px;top:5px" width="44" height="18"><use href="#calw"/><use href="#card" x="23"/></svg>
<span class="t" style="left:128.4px;top:12.9px;font-size:13.5px;font-weight:400;color:#1f2a33;letter-spacing:0.03px;">1</span>
<svg class="abs ic" style="left:148px;top:6px" width="9" height="17" viewBox="0 0 9 17"><path d="M0.3 6.6 L4.2 0.2 L8.1 6.6Z M0.3 9.4 L8.1 9.4 L4.2 16Z" fill="var(--a,#939393)"/></svg>
<svg class="abs ic" style="left:172px;top:5px" width="106" height="18"><use href="#acts"/></svg>
<span class="t" style="left:235.2px;top:13.5px;font-size:8.5px;font-weight:700;color:#4f4f4f;letter-spacing:0.38px;font-family:'DejaVu Sans','Liberation Sans',sans-serif;">CRM</span>
<span class="t" style="left:285.5px;top:15.3px;font-size:13.5px;font-weight:400;color:#1f2a33;letter-spacing:0.01px;">That 70&#x27;s Show</span>
<span class="t" style="left:444px;top:15.3px;font-size:13.5px;font-weight:400;color:#1f2a33;letter-spacing:-0.04px;">Jackie Burkhart</span>
<span class="t" style="left:602px;top:15.3px;font-size:13.5px;font-weight:400;color:#1f2a33;letter-spacing:0.35px;">Marketing Director</span>
<span class="t" style="left:734.4px;top:15.3px;font-size:13.5px;font-weight:400;color:#1f2a33;letter-spacing:0.07px;">(603) 952-2500</span>
<span class="t" style="left:867.7px;top:15.3px;font-size:13.5px;font-weight:400;color:#1f2a33;letter-spacing:0.17px;">Oklahoma City</span>
<span class="t" style="left:975.6px;top:15.3px;font-size:13.5px;font-weight:400;color:#1f2a33;letter-spacing:-0.42px;">OK</span>
<span class="t" style="left:1083.6px;top:15.3px;font-size:13.5px;font-weight:400;color:#1f2a33;letter-spacing:0.16px;">test@test.com</span>
</div>
<div class="row" style="top:707px">
<span class="t" style="left:10.9px;top:15.3px;font-size:13.5px;font-weight:400;color:#1f2a33;letter-spacing:0.03px;">19</span>
<div class="cb ck" style="left:42px;top:5px"><svg width="15" height="15" viewBox="0 0 15 15"><path d="M2.6 7.6 L6 12 L13 2.2" stroke="#555" stroke-width="1.2" fill="none"/></svg></div>
<svg class="abs" style="left:67px;top:5px" width="44" height="18"><use href="#calw"/><use href="#card" x="23"/></svg>
<span class="t" style="left:128.4px;top:12.9px;font-size:13.5px;font-weight:400;color:#1f2a33;letter-spacing:0.03px;">1</span>
<svg class="abs ic" style="left:148px;top:6px" width="9" height="17" viewBox="0 0 9 17"><path d="M0.3 6.6 L4.2 0.2 L8.1 6.6Z M0.3 9.4 L8.1 9.4 L4.2 16Z" fill="var(--a,#939393)"/></svg>
<svg class="abs ic" style="left:172px;top:5px" width="106" height="18"><use href="#acts"/></svg>
<span class="t" style="left:235.2px;top:13.5px;font-size:8.5px;font-weight:700;color:#4f4f4f;letter-spacing:0.38px;font-family:'DejaVu Sans','Liberation Sans',sans-serif;">CRM</span>
<span class="t" style="left:285.5px;top:15.3px;font-size:13.5px;font-weight:400;color:#1f2a33;letter-spacing:0.25px;">Law &amp; Order</span>
<span class="t" style="left:444px;top:15.3px;font-size:13.5px;font-weight:400;color:#1f2a33;letter-spacing:-0.15px;">Jack McCoy</span>
<span class="t" style="left:602px;top:15.3px;font-size:13.5px;font-weight:400;color:#1f2a33;letter-spacing:-0.00px;">Sales Director</span>
<span class="t" style="left:734.4px;top:15.3px;font-size:13.5px;font-weight:400;color:#1f2a33;letter-spacing:0.07px;">(603) 952-2500</span>
<span class="t" style="left:867.7px;top:15.3px;font-size:13.5px;font-weight:400;color:#1f2a33;letter-spacing:0.21px;">Frankfort</span>
<span class="t" style="left:975.6px;top:15.3px;font-size:13.5px;font-weight:400;color:#1f2a33;letter-spacing:-1.07px;">KY</span>
<span class="t" style="left:1083.6px;top:15.3px;font-size:13.5px;font-weight:400;color:#1f2a33;letter-spacing:0.16px;">test@test.com</span>
</div>
<div class="row" style="top:735px">
<span class="t" style="left:10.9px;top:15.3px;font-size:13.5px;font-weight:400;color:#1f2a33;letter-spacing:0.03px;">20</span>
<div class="cb ck" style="left:42px;top:5px"><svg width="15" height="15" viewBox="0 0 15 15"><path d="M2.6 7.6 L6 12 L13 2.2" stroke="#555" stroke-width="1.2" fill="none"/></svg></div>
<svg class="abs" style="left:67px;top:5px" width="44" height="18"><use href="#calw"/><use href="#card" x="23"/></svg>
<span class="t" style="left:128.4px;top:12.9px;font-size:13.5px;font-weight:400;color:#1f2a33;letter-spacing:0.03px;">1</span>
<svg class="abs ic" style="left:148px;top:6px" width="9" height="17" viewBox="0 0 9 17"><path d="M0.3 6.6 L4.2 0.2 L8.1 6.6Z M0.3 9.4 L8.1 9.4 L4.2 16Z" fill="var(--a,#939393)"/></svg>
<svg class="abs ic" style="left:172px;top:5px" width="106" height="18"><use href="#acts"/></svg>
<span class="t" style="left:235.2px;top:13.5px;font-size:8.5px;font-weight:700;color:#4f4f4f;letter-spacing:0.38px;font-family:'DejaVu Sans','Liberation Sans',sans-serif;">CRM</span>
<span class="t" style="left:285.5px;top:15.3px;font-size:13.5px;font-weight:400;color:#1f2a33;letter-spacing:0.04px;">Three&#x27;s Company</span>
<span class="t" style="left:444px;top:15.3px;font-size:13.5px;font-weight:400;color:#1f2a33;letter-spacing:0.01px;">Jack Tripper</span>
<span class="t" style="left:602px;top:15.3px;font-size:13.5px;font-weight:400;color:#1f2a33;letter-spacing:-0.15px;">Inside Sales Mana...</span>
<span class="t" style="left:734.4px;top:15.3px;font-size:13.5px;font-weight:400;color:#1f2a33;letter-spacing:0.07px;">(603) 952-2500</span>
<span class="t" style="left:867.7px;top:15.3px;font-size:13.5px;font-weight:400;color:#1f2a33;letter-spacing:0.21px;">Frankfort</span>
<span class="t" style="left:975.6px;top:15.3px;font-size:13.5px;font-weight:400;color:#1f2a33;letter-spacing:-1.07px;">KY</span>
<span class="t" style="left:1083.6px;top:15.3px;font-size:13.5px;font-weight:400;color:#1f2a33;letter-spacing:0.16px;">test@test.com</span>
</div>
<div class="row" style="top:763px">
<span class="t" style="left:10.9px;top:15.3px;font-size:13.5px;font-weight:400;color:#1f2a33;letter-spacing:0.03px;">21</span>
<div class="cb ck" style="left:42px;top:5px"><svg width="15" height="15" viewBox="0 0 15 15"><path d="M2.6 7.6 L6 12 L13 2.2" stroke="#555" stroke-width="1.2" fill="none"/></svg></div>
<svg class="abs" style="left:67px;top:5px" width="44" height="18"><use href="#calw"/><use href="#card" x="23"/></svg>
<span class="t" style="left:128.4px;top:12.9px;font-size:13.5px;font-weight:400;color:#1f2a33;letter-spacing:0.03px;">1</span>
<svg class="abs ic" style="left:148px;top:6px" width="9" height="17" viewBox="0 0 9 17"><path d="M0.3 6.6 L4.2 0.2 L8.1 6.6Z M0.3 9.4 L8.1 9.4 L4.2 16Z" fill="var(--a,#939393)"/></svg>
<svg class="abs ic" style="left:172px;top:5px" width="106" height="18"><use href="#acts"/></svg>
<span class="t" style="left:235.2px;top:13.5px;font-size:8.5px;font-weight:700;color:#4f4f4f;letter-spacing:0.38px;font-family:'DejaVu Sans','Liberation Sans',sans-serif;">CRM</span>
<span class="t" style="left:285.5px;top:15.3px;font-size:13.5px;font-weight:400;color:#1f2a33;letter-spacing:-0.04px;">Dawson&#x27;s Creek</span>
<span class="t" style="left:444px;top:15.3px;font-size:13.5px;font-weight:400;color:#1f2a33;letter-spacing:0.05px;">Joey Potter</span>
<span class="t" style="left:602px;top:15.3px;font-size:13.5px;font-weight:400;color:#1f2a33;letter-spacing:0.08px;">Director of Sales</span>
<span class="t" style="left:734.4px;top:15.3px;font-size:13.5px;font-weight:400;color:#1f2a33;letter-spacing:0.07px;">(603) 952-2500</span>
<span class="t" style="left:867.7px;top:15.3px;font-size:13.5px;font-weight:400;color:#1f2a33;letter-spacing:0.20px;">Annapolis</span>
<span class="t" style="left:975.6px;top:15.3px;font-size:13.5px;font-weight:400;color:#1f2a33;letter-spacing:0.69px;">MD</span>
<span class="t" style="left:1083.6px;top:15.3px;font-size:13.5px;font-weight:400;color:#1f2a33;letter-spacing:0.16px;">test@test.com</span>
</div>
<div class="row" style="top:791px">
<span class="t" style="left:10.9px;top:15.3px;font-size:13.5px;font-weight:400;color:#1f2a33;letter-spacing:0.03px;">22</span>
<div class="cb ck" style="left:42px;top:5px"><svg width="15" height="15" viewBox="0 0 15 15"><path d="M2.6 7.6 L6 12 L13 2.2" stroke="#555" stroke-width="1.2" fill="none"/></svg></div>
<svg class="abs" style="left:67px;top:5px" width="44" height="18"><use href="#calw"/><use href="#card" x="23"/></svg>
<span class="t" style="left:128.4px;top:12.9px;font-size:13.5px;font-weight:400;color:#1f2a33;letter-spacing:0.03px;">1</span>
<svg class="abs ic" style="left:148px;top:6px" width="9" height="17" viewBox="0 0 9 17"><path d="M0.3 6.6 L4.2 0.2 L8.1 6.6Z M0.3 9.4 L8.1 9.4 L4.2 16Z" fill="var(--a,#939393)"/></svg>
<svg class="abs ic" style="left:172px;top:5px" width="106" height="18"><use href="#acts"/></svg>
<span class="t" style="left:235.2px;top:13.5px;font-size:8.5px;font-weight:700;color:#4f4f4f;letter-spacing:0.38px;font-family:'DejaVu Sans','Liberation Sans',sans-serif;">CRM</span>
<span class="t" style="left:285.5px;top:15.3px;font-size:13.5px;font-weight:400;color:#1f2a33;letter-spacing:-0.00px;">Blossom</span>
<span class="t" style="left:444px;top:15.3px;font-size:13.5px;font-weight:400;color:#1f2a33;letter-spacing:-0.31px;">Joey Russo</span>
<span class="t" style="left:602px;top:15.3px;font-size:13.5px;font-weight:400;color:#1f2a33;letter-spacing:-0.99px;">CEO</span>
<span class="t" style="left:734.4px;top:15.3px;font-size:13.5px;font-weight:400;color:#1f2a33;letter-spacing:0.07px;">(603) 952-2500</span>
<span class="t" style="left:867.7px;top:15.3px;font-size:13.5px;font-weight:400;color:#1f2a33;letter-spacing:0.03px;">Phoenix</span>
<span class="t" style="left:975.6px;top:15.3px;font-size:13.5px;font-weight:400;color:#1f2a33;letter-spacing:-0.13px;">AZ</span>
<span class="t" style="left:1083.6px;top:15.3px;font-size:13.5px;font-weight:400;color:#1f2a33;letter-spacing:0.16px;">test@test.com</span>
</div>
</div>
<div class="sbt"></div><div class="sbh"></div>
<svg class="abs" style="left:1160px;top:176px" width="12" height="10" viewBox="0 0 12 10"><path d="M1.2 8 L6.5 2.6 L11.8 8" stroke="#8a8a8a" stroke-width="1.3" fill="none"/></svg>
<div class="foot"></div>
<svg class="abs" style="left:113px;top:7px" width="16" height="24" viewBox="113 7 16 24"><path d="M115.5 9.6 V26 L119.3 22.6 L122.2 28.6 L124.6 27.5 L121.8 21.6 H126.8 Z" fill="#fff" stroke="#111" stroke-width="1" stroke-linejoin="miter"/></svg>
</body>
</html>
